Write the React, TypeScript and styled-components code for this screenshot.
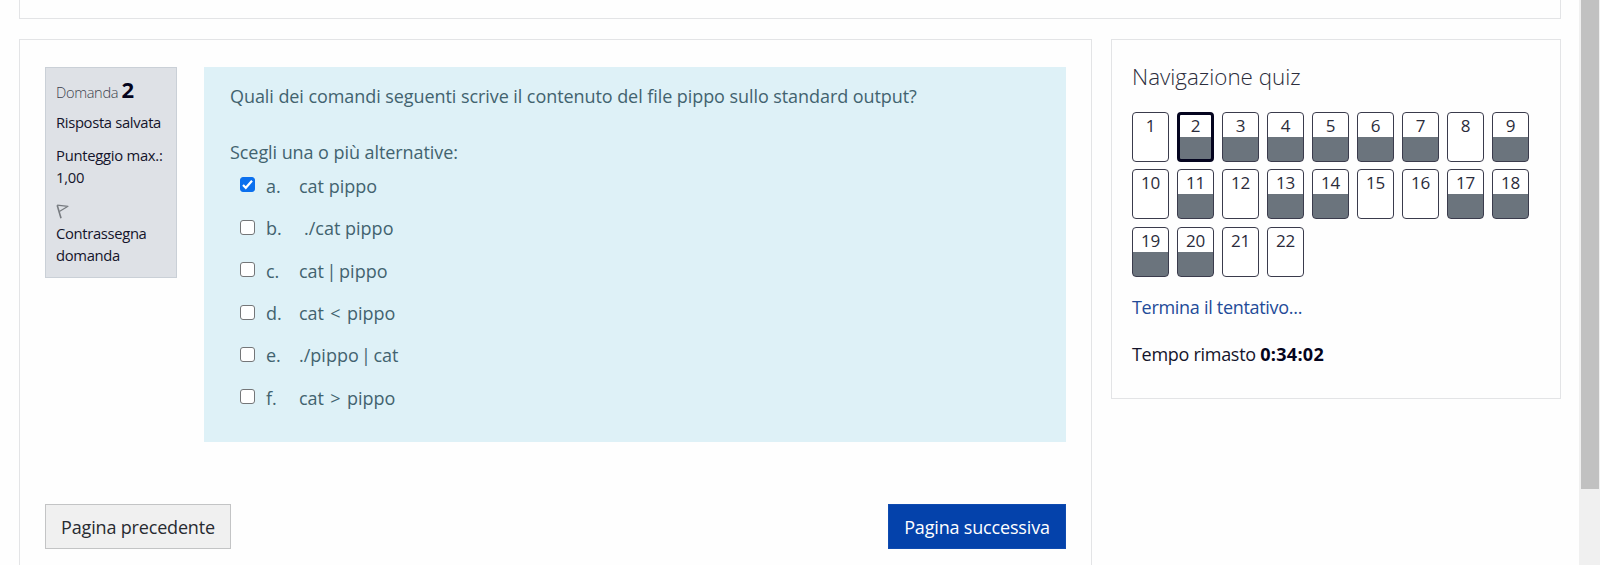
import React from 'react';
import styled, { createGlobalStyle } from 'styled-components';

const GlobalStyle = createGlobalStyle`
  *, *::before, *::after { box-sizing: border-box; }
  html, body { margin: 0; height: 565px; overflow: hidden; }
  body {
    background: #fefefe;
    color: #14142b;
    font-family: "Open Sans", "Noto Sans", sans-serif;
    font-size: 18px;
    line-height: 28px;
  }
`;

const Shell = styled.div`
  display: flex;
  height: 565px;
  overflow: hidden;
`;

const Page = styled.main`
  flex: 1;
  min-width: 0;
  padding: 0 18px 0 19px;
`;

const Panel = styled.section`
  background: #fefefe;
  border: 1px solid #e3e4e6;
`;

const HeaderPanel = styled(Panel)`
  height: 19px;
  border-top: 0;
`;

const Columns = styled.div`
  display: flex;
  align-items: flex-start;
  gap: 19px;
  margin-top: 20px;
`;

const QuizPanel = styled(Panel)`
  width: 1073px;
  height: 600px;
  padding: 27px 25px;
`;

const Question = styled.article`
  display: flex;
  align-items: flex-start;
  justify-content: space-between;
`;

const Info = styled.aside`
  width: 132px;
  height: 211px;
  padding: 6px 10px 0;
  border: 1px solid #cad0d7;
  background: #dee1e6;
  font-size: 14.8px;
  line-height: 22.4px;
  letter-spacing: -0.34px;
`;

const InfoTitle = styled.h3`
  margin: 0;
  height: 37px;
  font-size: 14.6px;
  line-height: 30px;
  font-weight: 300;
  color: #3c3f4c;
  white-space: nowrap;
`;

const QuestionNumber = styled.b`
  font-size: 22px;
  font-weight: 700;
  color: #04041c;
`;

const InfoLine = styled.div<{ $track?: number }>`
  margin-bottom: 10.2px;
  letter-spacing: ${(p) => p.$track ?? -0.34}px;
`;

const FlagIcon = styled.svg`
  display: block;
  width: 13px;
  height: 15px;
  margin: 16px 0 2.4px;
`;

const Formulation = styled.div`
  width: 862px;
  height: 375px;
  padding: 15px 26px;
  background: #def1f7;
  color: #42636f;
  letter-spacing: -0.07px;
`;

const Prompt = styled.p`
  margin: 0 0 28px;
`;

const Answers = styled.div`
  display: grid;
  grid-auto-rows: 28px;
  row-gap: 14.4px;
  margin-top: 5.8px;
  padding-left: 10px;
`;

const Answer = styled.label`
  display: grid;
  grid-template-columns: 26px 33px 1fr;
  white-space: pre;
`;

const Checkbox = styled.span<{ $checked: boolean }>`
  display: block;
  width: 15px;
  height: 15px;
  margin-top: 5.6px;
  border: 1px solid ${(p) => (p.$checked ? '#0b70ee' : '#747678')};
  border-radius: 3px;
  background: ${(p) => (p.$checked ? '#0b70ee' : '#fff')};

  svg { display: block; width: 13px; height: 13px; }
`;

const AnswerText = styled.span<{ $words?: number; $indent?: boolean }>`
  letter-spacing: 0;
  word-spacing: ${(p) => p.$words ?? 0}px;
  padding-left: ${(p) => (p.$indent ? 5 : 0)}px;
`;

const Actions = styled.div`
  display: flex;
  justify-content: space-between;
  margin-top: 62px;
`;

const Button = styled.button<{ $primary?: boolean }>`
  width: ${(p) => (p.$primary ? 178 : 186)}px;
  height: 45px;
  padding: 1px 0 0;
  border: 1px solid ${(p) => (p.$primary ? '#0f4bb0' : '#c3c4c5')};
  background: ${(p) => (p.$primary ? '#0442ab' : '#f0f0f0')};
  color: ${(p) => (p.$primary ? '#fff' : '#282b30')};
  font: inherit;
  letter-spacing: -0.17px;
`;

const NavPanel = styled(Panel)`
  width: 450px;
  height: 360px;
  padding: 20px 20px;
`;

const NavTitle = styled.h2`
  margin: 0 0 19px;
  font-size: 22.4px;
  line-height: 33px;
  font-weight: 300;
  color: #2b2d3c;
`;

const NavGrid = styled.nav`
  display: grid;
  grid-template-columns: repeat(9, 37px);
  grid-auto-rows: 50px;
  gap: 7.3px 8px;
`;

const NavButton = styled.a<{ $answered: boolean; $current: boolean }>`
  border: ${(p) => (p.$current ? '3px solid #04041f' : '1px solid #3a3b4c')};
  border-radius: 4px;
  padding-top: ${(p) => (p.$current ? 0 : 2)}px;
  background: ${(p) =>
    p.$answered
      ? `linear-gradient(#fff ${p.$current ? 22 : 24}px, #6b747d ${p.$current ? 22 : 24}px)`
      : '#fff'};
  color: #2b2c3b;
  font-size: 17px;
  line-height: 21px;
  letter-spacing: -0.3px;
  text-align: center;
`;

const FinishLink = styled.a`
  display: block;
  margin-top: 16px;
  color: #234b98;
  letter-spacing: -0.3px;
`;

const Timer = styled.div`
  margin-top: 19px;
  letter-spacing: -0.29px;
`;

const TimeLeft = styled.b`
  color: #04041c;
  letter-spacing: 0.3px;
`;

const ScrollTrack = styled.div`
  width: 21px;
  padding: 0 1px 0 2px;
  background: #f0f0f0;
`;

const ScrollThumb = styled.div`
  height: 489px;
  background: #c1c1c1;
`;

const answers = [
  { key: 'a', text: 'cat pippo' },
  { key: 'b', text: './cat pippo', indent: true },
  { key: 'c', text: 'cat | pippo', words: -2.1 },
  { key: 'd', text: 'cat < pippo', words: 1.6 },
  { key: 'e', text: './pippo | cat', words: -2.3 },
  { key: 'f', text: 'cat > pippo', words: 1.6 },
];

const answered = new Set([2, 3, 4, 5, 6, 7, 9, 11, 13, 14, 17, 18, 19, 20]);
const currentQuestion = 2;
const questions = Array.from({ length: 22 }, (_, i) => i + 1);

export default function App() {
  return (
    <>
      <GlobalStyle />
      <Shell>
        <Page>
          <HeaderPanel />
          <Columns>
            <QuizPanel>
              <Question>
                <Info>
                  <InfoTitle>
                    Domanda <QuestionNumber>2</QuestionNumber>
                  </InfoTitle>
                  <InfoLine>Risposta salvata</InfoLine>
                  <InfoLine $track={-0.27}>
                    Punteggio max.:
                    <br />
                    1,00
                  </InfoLine>
                  <FlagIcon viewBox="0 0 13 15" fill="none" stroke="#777b80" strokeLinejoin="round">
                    <path d="M1.2 1.2 L5 14.2" strokeWidth="1.6" />
                    <path d="M1.2 1.2 L12 2.3 L3.4 7.4" strokeWidth="1.2" />
                  </FlagIcon>
                  <InfoLine>
                    Contrassegna
                    <br />
                    domanda
                  </InfoLine>
                </Info>
                <Formulation>
                  <Prompt>
                    Quali dei comandi seguenti scrive il contenuto del file pippo sullo standard output?
                  </Prompt>
                  <div>Scegli una o più alternative:</div>
                  <Answers>
                    {answers.map((a) => (
                      <Answer key={a.key}>
                        <Checkbox $checked={a.key === 'a'}>
                          {a.key === 'a' && (
                            <svg viewBox="0 0 13 13" fill="none" stroke="#fff" strokeWidth="2.2">
                              <path d="M2 7 L4.8 9.8 L11 2.8" />
                            </svg>
                          )}
                        </Checkbox>
                        <span>{a.key}.</span>
                        <AnswerText $words={a.words} $indent={a.indent}>
                          {a.text}
                        </AnswerText>
                      </Answer>
                    ))}
                  </Answers>
                </Formulation>
              </Question>
              <Actions>
                <Button>Pagina precedente</Button>
                <Button $primary>Pagina successiva</Button>
              </Actions>
            </QuizPanel>
            <NavPanel>
              <NavTitle>Navigazione quiz</NavTitle>
              <NavGrid>
                {questions.map((n) => (
                  <NavButton key={n} $answered={answered.has(n)} $current={n === currentQuestion}>
                    {n}
                  </NavButton>
                ))}
              </NavGrid>
              <FinishLink>Termina il tentativo...</FinishLink>
              <Timer>
                Tempo rimasto <TimeLeft>0:34:02</TimeLeft>
              </Timer>
            </NavPanel>
          </Columns>
        </Page>
        <ScrollTrack>
          <ScrollThumb />
        </ScrollTrack>
      </Shell>
    </>
  );
}
